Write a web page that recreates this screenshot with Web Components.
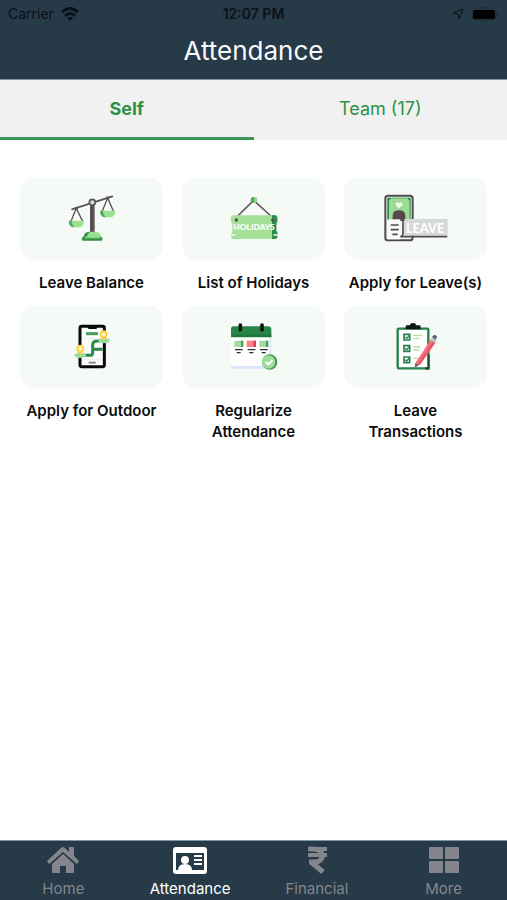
<!DOCTYPE html>
<html lang="en">
<head>
  <meta charset="UTF-8">
  <meta name="viewport" content="width=device-width, initial-scale=1">
  <title>Attendance</title>
  <style>
    body {
      margin: 0;
      min-height: 100vh;
      display: flex;
      flex-direction: column;
      background: #fff;
      color: #0c0c0c;
      font-family: Inter, "Open Sans", sans-serif;
      --bar: #273a48;
      --green: #2f9149;
      --tile: #f5faf6;
    }

    main {
      flex: 1;
    }
  </style>
</head>
<body>
  <app-header>Attendance</app-header>
  <tab-bar>
    <tab-item selected>Self</tab-item>
    <tab-item>Team (17)</tab-item>
  </tab-bar>
  <main>
    <tile-grid>
      <menu-tile icon="balance">Leave Balance</menu-tile>
      <menu-tile icon="holidays">List of Holidays</menu-tile>
      <menu-tile icon="leave">Apply for Leave(s)</menu-tile>
      <menu-tile icon="outdoor">Apply for Outdoor</menu-tile>
      <menu-tile icon="regularize">Regularize Attendance</menu-tile>
      <menu-tile icon="transactions">Leave Transactions</menu-tile>
    </tile-grid>
  </main>
  <bottom-nav>
    <nav-item icon="home" href="#home">Home</nav-item>
    <nav-item icon="card" href="#attendance" active>Attendance</nav-item>
    <nav-item icon="rupee" href="#financial">Financial</nav-item>
    <nav-item icon="grid" href="#more">More</nav-item>
  </bottom-nav>

  <script>
    const tileIcons = {
      balance: `
        <svg viewBox="5 12 210 180" aria-hidden="true">
          <g fill="none" stroke="#5b5359" stroke-width="5" stroke-linecap="round">
            <path d="M50 73 171 34"/>
            <path d="M63 70 47 109M63 70 82 109M157 39 140 80M157 39 175 80" stroke-width="4"/>
          </g>
          <circle cx="63" cy="70" r="5" fill="#5b5359"/>
          <circle cx="157" cy="39" r="5" fill="#5b5359"/>
          <path d="M105 57h13v84h-13z" fill="#5f5058"/>
          <path d="M105 57h4v84h-4z" fill="#494149"/>
          <circle cx="111" cy="52" r="9" fill="#d4d8d4" stroke="#5b5359" stroke-width="5"/>
          <path d="M41 107h44v7q-3 13-14 13H56q-12 0-15-13z" fill="#9be091"/>
          <path d="M41 107h8q0 13 10 20h-3q-12 0-15-13z" fill="#54a75f"/>
          <path d="M135 77h44v7q-3 13-14 13h-15q-12 0-15-13z" fill="#9be091"/>
          <path d="M135 77h8q0 13 10 20h-3q-12 0-15-13z" fill="#54a75f"/>
          <path d="M84 158q2-18 18-18h19q15 0 17 18z" fill="#9be091"/>
          <path d="M84 158q2-18 18-18h4q-10 4-11 18z" fill="#44934f"/>
          <rect x="80" y="156" width="61" height="11" rx="3" fill="#359047"/>
          <path d="M88 156h47v4H88z" fill="#83d47d"/>
        </svg>`,
      holidays: `
        <svg viewBox="11 12 210 180" aria-hidden="true">
          <path d="M64 96 115 46l55 50" fill="none" stroke="#62585d" stroke-width="5"/>
          <circle cx="117" cy="45" r="9" fill="#8fda89"/>
          <path d="M115 36a9 9 0 0 0 0 18q5-9 0-18z" fill="#4aa85e"/>
          <path d="M51 91h128q7 0 7 7v13l-3 4v23l3 3v15q0 6-7 6H51q-3 0-3-5v-12l3-3V116l-4-4V95q0-4 4-4z" fill="#a5df98"/>
          <path d="M170 91h9q7 0 7 7v13l-3 4v23l3 3v15q0 6-7 6h-9z" fill="#2c8d4c"/>
          <circle cx="63" cy="105" r="5" fill="#584e4e"/>
          <circle cx="172" cy="105" r="5" fill="#584e4e"/>
          <path d="M48 150h12M174 150h12" stroke="#f5faf6" stroke-width="4"/>
          <text x="54" y="136" fill="#fff" font-family="Lato, sans-serif" font-size="25" font-weight="900">HOLIDAYS</text>
        </svg>`,
      leave: `
        <svg viewBox="18 12 210 180" aria-hidden="true">
          <rect x="31" y="32" width="82" height="134" rx="8" fill="#eef5ef" stroke="#534a50" stroke-width="6"/>
          <path d="M37 38h70v68H37z" fill="#258943"/>
          <path d="M47 40h50l7 8v58H42V47z" fill="#9cdb91"/>
          <path d="M72 70c-5-5-10-7-10-12 0-7 8-8 10-3 3-5 10-4 10 3 0 5-5 7-10 12z" fill="#f3fff0"/>
          <path d="M53 108V92q0-16 19-16t19 16v16z" fill="#554950"/>
          <path d="M37 103h39v60H37z" fill="#f7faf7"/>
          <path d="M47 120h24M47 134h24M52 148h16" stroke="#51494e" stroke-width="5"/>
          <path d="M88 102h130v50H88z" fill="#d5d8d6"/>
          <path d="M84 104v42q0 7-8 9h141" fill="none" stroke="#544a50" stroke-width="5"/>
          <text x="93" y="143" fill="#fff" font-family="Lato, sans-serif" font-size="38" font-weight="900">LEAVE</text>
        </svg>`,
      outdoor: `
        <svg viewBox="5 6 210 180" aria-hidden="true">
          <rect x="74" y="34" width="73" height="121" rx="5" fill="#fafcfb" stroke="#080a09" stroke-width="9"/>
          <path d="M96 32h31q-1 10-7 10h-17q-6 0-7-10z" fill="#080a09"/>
          <path d="M92 56h36" stroke="#469b5d" stroke-width="9"/>
          <path d="M84 70h35M84 133h54" stroke="#dfe6e4" stroke-width="2"/>
          <path d="M100 143h21" stroke="#858c88" stroke-width="6"/>
          <path d="M87 121h17q8 0 8-8V91q0-13 13-13h10M112 103h30" fill="none" stroke="#2b894c" stroke-width="9"/>
          <ellipse cx="75" cy="121" rx="17" ry="8" fill="#9edb99"/>
          <ellipse cx="146" cy="77" rx="17" ry="8" fill="#9edb99"/>
          <path d="M75 119q-14-12-12-20 2-10 12-10t12 10q1 8-12 20z" fill="#ffcf42"/>
          <circle cx="75" cy="101" r="6" fill="#fff5cf"/>
          <path d="M145 76q-14-12-12-20 2-10 12-10t12 10q1 8-12 20z" fill="#ffcf42"/>
          <circle cx="145" cy="58" r="6" fill="#fff5cf"/>
        </svg>`,
      regularize: `
        <svg viewBox="11 6 210 180" aria-hidden="true">
          <path d="M47 63h121v91q0 7-7 7H54q-7 0-7-7z" fill="#dfe6fc"/>
          <path d="M47 63h115v85q0 5-7 5H54q-7 0-7-5z" fill="#fff"/>
          <path d="M47 67V42q0-8 8-8h104q9 0 9 8v25z" fill="#288747"/>
          <path d="M49 62h119" stroke="#20793c" stroke-width="8"/>
          <path d="M75 30v14M140 30v14" stroke="#101212" stroke-width="11" stroke-linecap="round"/>
          <path d="M57 77h26v19H57zM132 77h26v19h-26z" fill="#a5daa0"/>
          <path d="M77 77h7v19h-7zM152 77h7v19h-7z" fill="#409e59"/>
          <path d="M94 77h27v19H94z" fill="#fc8080"/>
          <path d="M115 77h7v19h-7z" fill="#df3848"/>
          <path d="M59 104h23M97 104h23M134 104h23M64 113h12M102 113h12M139 113h12" stroke="#272b2b" stroke-width="4"/>
          <circle cx="163" cy="141" r="23" fill="#3d9654"/>
          <circle cx="160" cy="141" r="20" fill="#9fdb99"/>
          <path d="m151 141 8 7 13-13" fill="none" stroke="#fff" stroke-width="6"/>
        </svg>`,
      transactions: `
        <svg viewBox="18 6 210 180" aria-hidden="true">
          <rect x="68" y="41" width="92" height="119" rx="3" fill="#fcfffb" stroke="#25804b" stroke-width="7"/>
          <path d="M151 157h12v7h-12zM159 118h5v45h-5z" fill="#174b32"/>
          <path d="M92 43v-8q0-4 4-4h8q2-7 10-7t10 7h9q4 0 4 4v8z" fill="#101515"/>
          <g fill="#fff" stroke="#277f4d" stroke-width="5">
            <path d="M87 58h17v17H87zM87 92h17v17H87zM87 126h17v17H87z"/>
            <path d="m91 66 4 4 8-9M91 100l4 4 8-9M91 134l4 4 8-9" fill="none" stroke-width="4"/>
          </g>
          <path d="M115 61h27M115 71h17M115 96h20M115 105h18M115 130h17" stroke="#b3dfa4" stroke-width="4"/>
          <path d="m167 74 14 9-46 66-15 8 3-16z" fill="#f77079"/>
          <path d="m174 79 7 4-46 66-7-3z" fill="#e75868"/>
          <path d="m121 143 10 7-12 8z" fill="#586c79"/>
          <path d="m166 74 5-7 14 9-5 8z" fill="#bac7d0"/>
          <path d="m171 66 3-4q3-4 8-1 6 3 3 8l-3 5z" fill="#52636f"/>
        </svg>`
    };

    const navIcons = {
      home: `
        <svg viewBox="0 0 34 28" aria-hidden="true" fill="currentColor">
          <path d="m1 15 14-13q2-2 4 0l4 4V1h5v9l5 5-2 3L17 6 3 18z"/>
          <path d="M6 18 17 8l11 10v8q0 1-1 1h-7v-7h-6v7H7q-1 0-1-1z"/>
        </svg>`,
      card: `
        <svg viewBox="0 0 34 28" aria-hidden="true">
          <rect width="34" height="27" y="1" rx="3" fill="currentColor"/>
          <path d="M3 7h28v17H3z" fill="#273a48"/>
          <circle cx="12" cy="14" r="4" fill="currentColor"/>
          <path d="M5 24q0-6 7-6t7 6z" fill="currentColor"/>
          <path d="M21 10h8M21 14h8M21 18h8" stroke="currentColor" stroke-width="2"/>
        </svg>`,
      rupee: `
        <svg viewBox="0 0 34 28" aria-hidden="true" fill="none" stroke="currentColor" stroke-width="4">
          <path d="M8 3h19M8 9h19"/>
          <path d="M9 3h4c12 0 12 13 2 13H9M11 16l12 10" stroke-width="5"/>
        </svg>`,
      grid: `
        <svg viewBox="0 0 34 28" aria-hidden="true" fill="currentColor">
          <rect x="2" y="1" width="14" height="12" rx="1"/>
          <rect x="18" y="1" width="14" height="12" rx="1"/>
          <rect x="2" y="15" width="14" height="12" rx="1"/>
          <rect x="18" y="15" width="14" height="12" rx="1"/>
        </svg>`
    };

    class AppHeader extends HTMLElement {
      constructor() {
        super();
        this.attachShadow({ mode: 'open' });
      }

      connectedCallback() {
        this.shadowRoot.innerHTML = `
          <style>
            :host {
              display: block;
              background: var(--bar);
              border-bottom: 1px solid #8295a3;
            }

            .status {
              display: grid;
              grid-template-columns: 1fr auto 1fr;
              align-items: center;
              height: 27px;
              padding: 0 8px;
              color: #0b1118;
              font-size: 14px;
            }

            .network, .power {
              display: flex;
              align-items: center;
              gap: 7px;
            }

            .power {
              justify-content: flex-end;
            }

            .time {
              font-weight: 600;
            }

            svg {
              display: block;
            }

            h1 {
              margin: 0;
              padding: 4px 0 8px;
              color: #f7fafc;
              font-size: 26px;
              font-weight: 400;
              line-height: 40px;
              text-align: center;
            }
          </style>

          <div class="status">
            <span class="network">
              Carrier
              <svg width="18" height="14" viewBox="0 0 18 14" aria-hidden="true">
                <g fill="none" stroke="currentColor" stroke-width="3">
                  <path d="M1 5q8-7 16 0M4 9q5-5 10 0"/>
                </g>
                <path d="m6 11 3 3 3-3q-3-2-6 0z" fill="currentColor"/>
              </svg>
            </span>
            <span class="time">12:07 PM</span>
            <span class="power">
              <svg width="12" height="12" viewBox="0 0 12 12" aria-hidden="true">
                <path d="M11 1 1 5l5 1 1 5z" fill="none" stroke="currentColor"/>
              </svg>
              <svg width="28" height="14" viewBox="0 0 28 14" aria-hidden="true">
                <rect x="1" y="1" width="24" height="12" rx="4" fill="none" stroke="#1d2b37"/>
                <rect x="2" y="3" width="22" height="9" rx="2" fill="#000"/>
                <path d="M26 5q3 2 0 4z" fill="#1d2b37"/>
              </svg>
            </span>
          </div>
          <h1><slot></slot></h1>
        `;
      }
    }

    class TabBar extends HTMLElement {
      constructor() {
        super();
        this.attachShadow({ mode: 'open' });
      }

      connectedCallback() {
        this.shadowRoot.innerHTML = `
          <style>
            :host {
              display: flex;
              background: #f1f1f1;
            }
          </style>
          <slot></slot>
        `;
        this.addEventListener('click', (event) => {
          const item = event.target.closest('tab-item');
          if (!item) return;
          this.querySelectorAll('tab-item').forEach((tab) => {
            tab.toggleAttribute('selected', tab === item);
          });
        });
      }
    }

    class TabItem extends HTMLElement {
      static observedAttributes = ['selected'];

      constructor() {
        super();
        this.attachShadow({ mode: 'open' });
        this.shadowRoot.innerHTML = `
          <style>
            :host {
              display: block;
              flex: 1;
            }

            button {
              width: 100%;
              height: 60px;
              padding: 0;
              border: 0;
              border-bottom: 3px solid transparent;
              background: none;
              color: var(--green);
              font: 400 18px Inter, sans-serif;
              cursor: pointer;
            }

            :host([selected]) button {
              border-color: #3d965a;
              font-weight: 700;
            }
          </style>
          <button type="button"><slot></slot></button>
        `;
      }

      attributeChangedCallback() {
        this.shadowRoot.querySelector('button').setAttribute('aria-pressed', this.hasAttribute('selected'));
      }
    }

    class TileGrid extends HTMLElement {
      constructor() {
        super();
        this.attachShadow({ mode: 'open' });
      }

      connectedCallback() {
        this.shadowRoot.innerHTML = `
          <style>
            :host {
              display: grid;
              grid-template-columns: repeat(3, minmax(0, 1fr));
              gap: 13px 19px;
              padding: 38px 20px 20px;
            }
          </style>
          <slot></slot>
        `;
      }
    }

    class MenuTile extends HTMLElement {
      constructor() {
        super();
        this.attachShadow({ mode: 'open' });
      }

      connectedCallback() {
        this.shadowRoot.innerHTML = `
          <style>
            :host {
              display: block;
            }

            button {
              display: flex;
              flex-direction: column;
              align-items: center;
              gap: 12px;
              width: 100%;
              padding: 0;
              border: 0;
              background: none;
              color: inherit;
              font: 600 15px/21px Inter, sans-serif;
              cursor: pointer;
            }

            .picture {
              display: grid;
              place-items: center;
              width: 100%;
              height: 82px;
              border-radius: 14px;
              background: var(--tile);
            }

            .label {
              padding: 0 4px;
            }

            svg {
              width: 70px;
              height: 60px;
            }
          </style>
          <button type="button">
            <span class="picture">${tileIcons[this.getAttribute('icon')]}</span>
            <span class="label"><slot></slot></span>
          </button>
        `;
      }
    }

    class BottomNav extends HTMLElement {
      constructor() {
        super();
        this.attachShadow({ mode: 'open' });
      }

      connectedCallback() {
        this.shadowRoot.innerHTML = `
          <style>
            :host {
              display: block;
              background: var(--bar);
              border-top: 1px solid #8295a3;
            }

            nav {
              display: grid;
              grid-template-columns: repeat(4, 1fr);
            }
          </style>
          <nav><slot></slot></nav>
        `;
      }
    }

    class NavItem extends HTMLElement {
      constructor() {
        super();
        this.attachShadow({ mode: 'open' });
      }

      connectedCallback() {
        this.shadowRoot.innerHTML = `
          <style>
            :host {
              display: block;
              color: #85868d;
            }

            :host([active]) {
              color: #fff;
            }

            a {
              display: flex;
              flex-direction: column;
              align-items: center;
              gap: 5px;
              padding: 5px 0 1px;
              color: inherit;
              font-size: 15px;
              line-height: 20px;
              text-decoration: none;
            }

            svg {
              width: 34px;
              height: 28px;
            }
          </style>
          <a href="${this.getAttribute('href')}">
            ${navIcons[this.getAttribute('icon')]}
            <slot></slot>
          </a>
        `;
      }
    }

    customElements.define('app-header', AppHeader);
    customElements.define('tab-bar', TabBar);
    customElements.define('tab-item', TabItem);
    customElements.define('tile-grid', TileGrid);
    customElements.define('menu-tile', MenuTile);
    customElements.define('bottom-nav', BottomNav);
    customElements.define('nav-item', NavItem);
  </script>
</body>
</html>
